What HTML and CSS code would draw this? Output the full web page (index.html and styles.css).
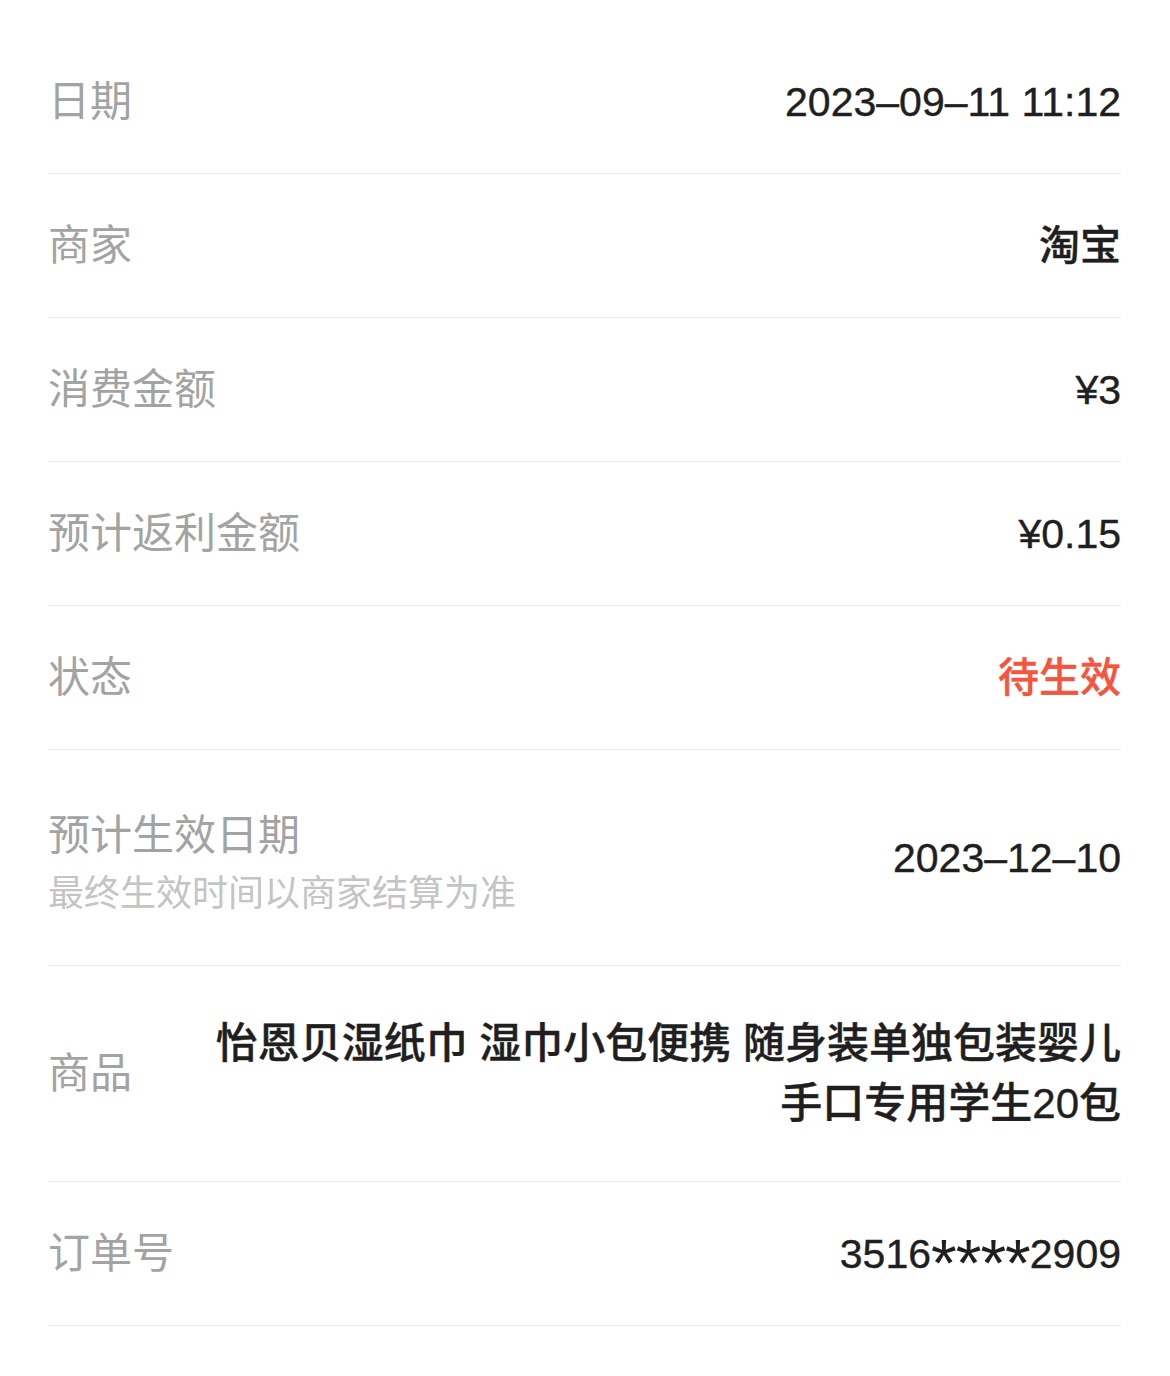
FILE: index.html
```html
<!DOCTYPE html>
<html lang="zh-CN">
<head>
    <meta charset="UTF-8">
    <meta name="viewport" content="width=device-width, initial-scale=1.0">
    <link rel="stylesheet" href="styles.css">
    <title>订单详情</title>
</head>
<body>
    <div class="detail">
        <div class="row">
            <span class="label">日期</span>
            <span class="value">2023–09–11 11:12</span>
        </div>
        <div class="row">
            <span class="label">商家</span>
            <span class="value">淘宝</span>
        </div>
        <div class="row">
            <span class="label">消费金额</span>
            <span class="value">¥3</span>
        </div>
        <div class="row">
            <span class="label">预计返利金额</span>
            <span class="value">¥0.15</span>
        </div>
        <div class="row">
            <span class="label">状态</span>
            <span class="value pending">待生效</span>
        </div>
        <div class="row">
            <div class="label-block">
                <div class="label">预计生效日期</div>
                <div class="hint">最终生效时间以商家结算为准</div>
            </div>
            <span class="value">2023–12–10</span>
        </div>
        <div class="row row-tall">
            <span class="label">商品</span>
            <span class="value goods">怡恩贝湿纸巾 湿巾小包便携 随身装单独包装婴儿手口专用学生20包</span>
        </div>
        <div class="row">
            <span class="label">订单号</span>
            <span class="value">3516<span class="mask">****</span>2909</span>
        </div>
    </div>
</body>
</html>
```

FILE: styles.css
```css
body {
    margin: 0;
    background-color: #fff;
    font-family: "Liberation Sans", "Noto Sans CJK SC", sans-serif;
}

.detail {
    padding: 30px 49px 0 48px;
}

.row {
    display: flex;
    align-items: center;
    justify-content: space-between;
    min-height: 143px;
    border-bottom: 1px solid #ebebeb;
}

.label {
    flex-shrink: 0;
    font-size: 42px;
    line-height: 58px;
    color: #a3a3a3;
}

.label-block {
    padding: 57px 0 42px;
}

.hint {
    font-size: 36px;
    line-height: 58px;
    color: #c4c4c4;
}

.value {
    font-size: 41px;
    line-height: 58px;
    font-weight: 500;
    color: #1f1f1f;
    text-align: right;
    -webkit-text-stroke: 0.4px #1f1f1f;
}

/* masked digits: big asterisks sitting at cap height */
.mask {
    font-size: 66px;
    line-height: 0;
    letter-spacing: -1px;
    vertical-align: -18px;
    -webkit-text-stroke: 0;
}

.pending {
    color: #f4553e;
    -webkit-text-stroke: 0.4px #f4553e;
}

.row-tall {
    padding: 47px 0;
    min-height: 121px;
}

.goods {
    font-size: 42px;
    line-height: 60px;
    max-width: 910px;
    margin-left: 40px;
}
```
